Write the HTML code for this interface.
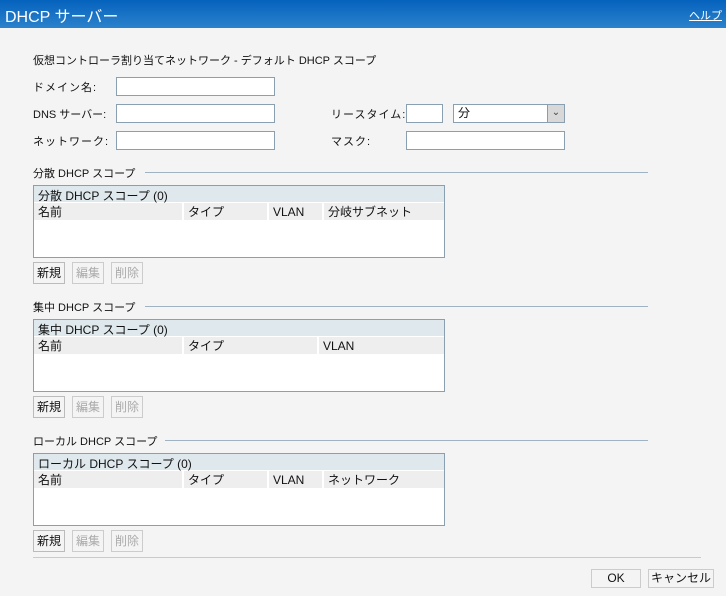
<!DOCTYPE html>
<html><head><meta charset="utf-8"><style>
*{box-sizing:border-box;margin:0;padding:0}
body{width:726px;height:596px;background:#f4f4f4;font-family:"Liberation Sans","Noto Sans CJK JP",sans-serif;font-size:12px;color:#111;position:relative;overflow:hidden}
.a{position:absolute;white-space:nowrap}
.hd{left:0;top:0;width:726px;height:28px;background:linear-gradient(#0562bd,#2b82cc)}
.in{position:absolute;background:#fff;border:1px solid #8a9fb0;height:19px}
.sec{position:absolute;height:1px;background:#9fb3c4}
.tb{position:absolute;left:33px;width:412px;height:73px;border:1px solid #8a9fb0;background:#fff}
.tb .t{height:17px;background:#dfe8ec;padding:1px 4px;border-bottom:1px solid #fff}
.tb .c{height:17px;background:#eee;position:relative}
.tb .c span{position:absolute;top:0;height:17px;padding:1px 4px 0;border-right:2px solid #fff;line-height:16px}
.b{position:absolute;height:22px;border:1px solid #bbb;background:#f4f4f4;text-align:center;line-height:20px}
.d{color:#aaa;border-color:#ccc}
.l{font-size:11px;letter-spacing:1px}
</style></head><body>
<div class="a hd"></div>
<div class="a" style="left:5px;top:3px;color:#fff;font-size:16px">DHCP サーバー</div>
<div class="a" style="left:689px;top:7px;color:#fff;font-size:11px;text-decoration:underline">ヘルプ</div>
<div class="a" style="left:33px;top:52px;font-size:11px">仮想コントローラ割り当てネットワーク - デフォルト DHCP スコープ</div>
<div class="a l" style="left:33px;top:79px">ドメイン名:</div>
<div class="in" style="left:116px;top:77px;width:159px"></div>
<div class="a" style="left:33px;top:106px;font-size:11px">DNS サーバー:</div>
<div class="in" style="left:116px;top:104px;width:159px"></div>
<div class="a l" style="left:331px;top:106px">リースタイム:</div>
<div class="in" style="left:406px;top:104px;width:37px"></div>
<div class="in" style="left:453px;top:104px;width:112px;padding-left:4px;line-height:17px">分<div style="position:absolute;right:0;top:0;width:17px;height:17px;background:#d8d8d8;border-left:1px solid #999;text-align:center;line-height:15px;font-size:10px;color:#444">&#8964;</div></div>
<div class="a l" style="left:33px;top:133px">ネットワーク:</div>
<div class="in" style="left:116px;top:131px;width:159px"></div>
<div class="a l" style="left:331px;top:133px">マスク:</div>
<div class="in" style="left:406px;top:131px;width:159px"></div>

<div class="a" style="left:33px;top:165px;font-size:11px">分散 DHCP スコープ</div>
<div class="sec" style="left:145px;top:172px;width:503px"></div>
<div class="tb" style="top:185px"><div class="t">分散 DHCP スコープ (0)</div><div class="c"><span style="left:0;width:150px">名前</span><span style="left:150px;width:85px">タイプ</span><span style="left:235px;width:55px">VLAN</span><span style="left:290px;width:120px;border:0">分岐サブネット</span></div></div>
<div class="b" style="left:33px;top:262px;width:32px">新規</div><div class="b d" style="left:72px;top:262px;width:32px">編集</div><div class="b d" style="left:111px;top:262px;width:32px">削除</div>

<div class="a" style="left:33px;top:299px;font-size:11px">集中 DHCP スコープ</div>
<div class="sec" style="left:145px;top:306px;width:503px"></div>
<div class="tb" style="top:319px"><div class="t">集中 DHCP スコープ (0)</div><div class="c"><span style="left:0;width:150px">名前</span><span style="left:150px;width:135px">タイプ</span><span style="left:285px;width:125px;border:0">VLAN</span></div></div>
<div class="b" style="left:33px;top:396px;width:32px">新規</div><div class="b d" style="left:72px;top:396px;width:32px">編集</div><div class="b d" style="left:111px;top:396px;width:32px">削除</div>

<div class="a" style="left:33px;top:433px;font-size:11px">ローカル DHCP スコープ</div>
<div class="sec" style="left:165px;top:440px;width:483px"></div>
<div class="tb" style="top:453px"><div class="t">ローカル DHCP スコープ (0)</div><div class="c"><span style="left:0;width:150px">名前</span><span style="left:150px;width:85px">タイプ</span><span style="left:235px;width:55px">VLAN</span><span style="left:290px;width:120px;border:0">ネットワーク</span></div></div>
<div class="b" style="left:33px;top:530px;width:32px">新規</div><div class="b d" style="left:72px;top:530px;width:32px">編集</div><div class="b d" style="left:111px;top:530px;width:32px">削除</div>

<div class="sec" style="left:33px;top:557px;width:668px;background:#c3ccd4"></div>
<div class="b" style="left:591px;top:569px;width:50px;height:19px;line-height:17px;border-color:#ccc">OK</div>
<div class="b" style="left:648px;top:569px;width:66px;height:19px;line-height:17px;border-color:#ccc">キャンセル</div>
</body></html>
